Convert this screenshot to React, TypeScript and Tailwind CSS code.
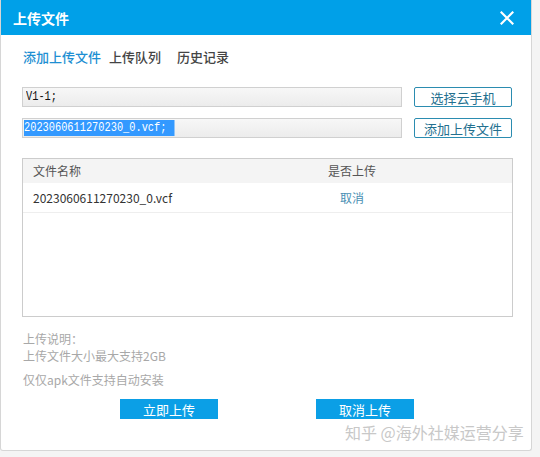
import React from "react";

const cjk = { fontFamily: '"Noto Sans CJK SC", "Noto Sans", sans-serif' };
const mono = { fontFamily: '"Liberation Mono", "Noto Sans CJK SC", monospace' };

export default function App() {
  return (
    <div className="w-[540px] h-[457px] bg-[#f4f4f4] relative overflow-hidden" style={cjk}>
      <div className="w-[532px] h-[451px] bg-white border-r border-b border-l border-[#d6d6d6] rounded-b-[3px] flex flex-col">
        {/* header */}
        <div className="h-[35px] bg-[#00a0e8] flex items-center justify-between pl-[12px] pr-[17px]">
          <span className="text-white text-[14px] font-bold leading-none">上传文件</span>
          <svg width="14" height="14" viewBox="0 0 14 14">
            <path d="M1.5 1.5 L12.5 12.5 M12.5 1.5 L1.5 12.5" stroke="white" strokeWidth="2.2" strokeLinecap="square" />
          </svg>
        </div>
        {/* tabs */}
        <div className="flex items-center h-[44px] pl-[22px] text-[13px] font-medium">
          <span className="text-[#1e8fd2]">添加上传文件</span>
          <span className="text-[#444] ml-[8px]">上传队列</span>
          <span className="text-[#444] ml-[16px]">历史记录</span>
        </div>
        {/* row 1 */}
        <div className="flex items-center pl-[21px] mt-[8px]">
          <div className="w-[380px] h-[20px] bg-gradient-to-b from-[#f7f7f7] to-[#ececec] border border-[#d0d0d0] flex items-center pl-[3px] text-[12px] text-[#111]" style={mono}>
            <span className="inline-block origin-left scale-x-[0.86]">V1-1;</span>
          </div>
          <button className="ml-[12px] w-[98px] h-[20px] border border-[#2b8cb0] rounded-[2px] bg-white text-[13px] text-[#24708f] leading-none flex items-center justify-center">
            选择云手机
          </button>
        </div>
        {/* row 2 */}
        <div className="flex items-center pl-[21px] mt-[11px]">
          <div className="w-[380px] h-[20px] bg-gradient-to-b from-[#f7f7f7] to-[#ececec] border border-[#d0d0d0] flex items-center pl-[1px] text-[12px]" style={mono}>
            <span className="inline-block origin-left scale-x-[0.86] bg-[#3399ff] text-white leading-[16px] pr-[2px] whitespace-pre">2023060611270230_0.vcf; </span>
          </div>
          <button className="ml-[12px] w-[98px] h-[20px] border border-[#2b8cb0] rounded-[2px] bg-white text-[13px] text-[#24708f] leading-none flex items-center justify-center">
            添加上传文件
          </button>
        </div>
        {/* table */}
        <div className="ml-[21px] mt-[20px] w-[491px] h-[159px] border border-[#cccccc] flex flex-col">
          <div className="h-[24px] bg-[#f4f4f4] flex items-center text-[12px] text-[#555]">
            <span className="pl-[10px] w-[299px]">文件名称</span>
            <span className="w-[60px] text-center">是否上传</span>
          </div>
          <div className="h-[30px] border-b border-[#eeeeee] flex items-center text-[12px]">
            <span className="pl-[10px] w-[299px] text-[#333]">2023060611270230_0.vcf</span>
            <span className="w-[60px] text-center text-[#4a8fb3]">取消</span>
          </div>
        </div>
        {/* notes */}
        <div className="pl-[22px] mt-[13px] text-[12px] text-[#a8a8a8] leading-[17px]">
          <div>上传说明：</div>
          <div>上传文件大小最大支持2GB</div>
          <div className="mt-[7px]">仅仅apk文件支持自动安装</div>
        </div>
        {/* buttons */}
        <div className="flex pl-[119px] mt-[11px] gap-[98px]">
          <button className="w-[98px] h-[20px] bg-[#0b9fe6] text-white text-[13px] leading-none flex items-center justify-center">
            立即上传
          </button>
          <button className="w-[98px] h-[20px] bg-[#0b9fe6] text-white text-[13px] leading-none flex items-center justify-center">
            取消上传
          </button>
        </div>
      </div>
      <div className="absolute left-[345px] top-[422px] text-[16px] text-[#c8c8c8] leading-[20px] whitespace-nowrap">
        知乎 @海外社媒运营分享
      </div>
    </div>
  );
}
